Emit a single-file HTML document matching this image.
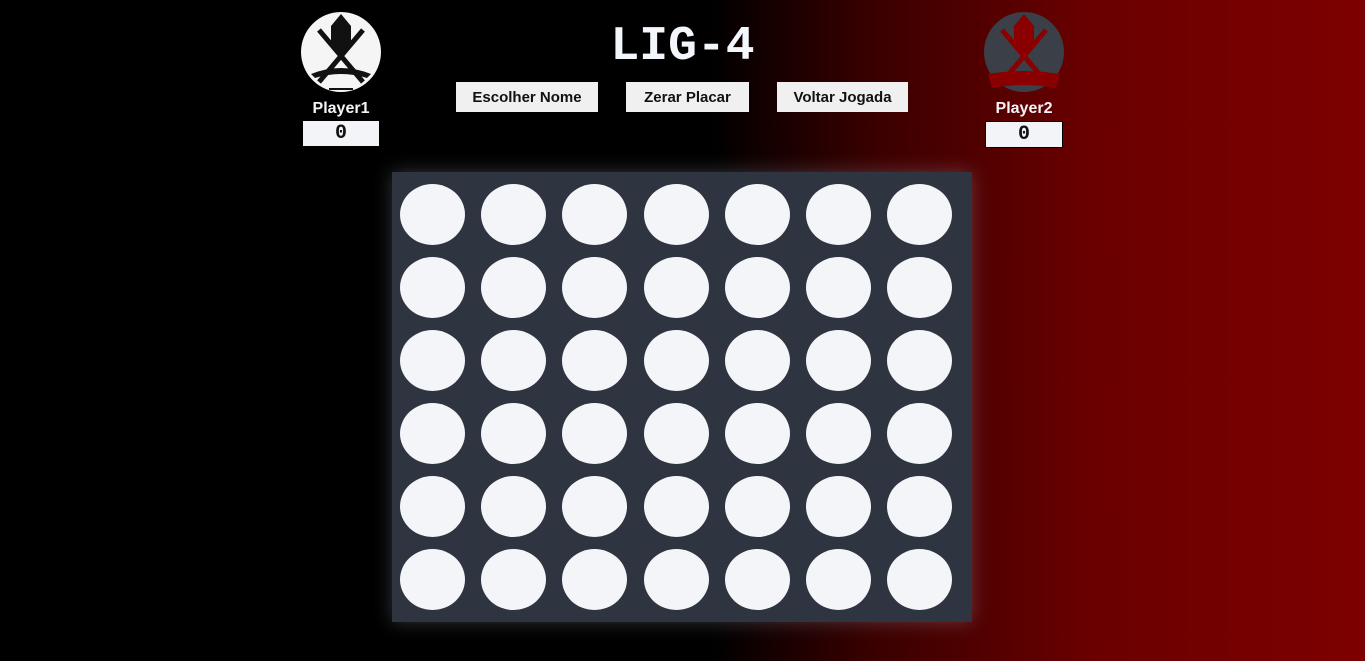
<!DOCTYPE html>
<html><head><style>
body{margin:0;width:1365px;height:661px;overflow:hidden;background:linear-gradient(90deg,#000 0%,#000 52%,#3a0000 64%,#6a0000 80%,#7d0000 100%);font-family:"Liberation Sans",sans-serif;position:relative}
.t{position:absolute;color:#f3f4f8;font-weight:bold}
.btn{position:absolute;top:82px;height:30px;background:#f0f0f0;font:bold 15px "Liberation Sans",sans-serif;color:#111;display:flex;align-items:center;justify-content:center;white-space:nowrap}
.score{position:absolute;top:121px;width:76px;height:25px;background:#f3f4f8;font:bold 20px "Liberation Mono",monospace;text-align:center;line-height:25px;color:#111}
.board{position:absolute;left:392px;top:172px;width:580px;height:450px;background:#2e3440;box-shadow:0 0 18px rgba(200,210,230,.25)}
.c{position:absolute;width:65px;height:61px;border-radius:50%;background:#f4f5f8}
</style></head><body>
<svg style="position:absolute;left:301px;top:12px" width="80" height="80"><circle cx="40" cy="40" r="40" fill="#f5f5f5"/><path d="M40 2 L50 14 L50 30 L44 40 L36 40 L30 30 L30 14 Z" fill="#111"/><path d="M18 18 L62 70 M62 18 L18 70" stroke="#111" stroke-width="5"/><path d="M10 62 Q40 50 70 62 L66 66 Q40 58 14 66Z" fill="#111"/><rect x="28" y="76" width="24" height="2" fill="#111"/></svg>
<svg style="position:absolute;left:984px;top:12px" width="80" height="80"><circle cx="40" cy="40" r="40" fill="#3b4048"/><path d="M40 2 L50 14 L50 30 L44 40 L36 40 L30 30 L30 14 Z" fill="#8a0000"/><path d="M18 18 L62 70 M62 18 L18 70" stroke="#8a0000" stroke-width="5"/><path d="M4 62 Q40 56 76 62 L72 76 Q40 70 8 76Z" fill="#8a0000"/></svg>
<div class="t" style="left:0;width:1365px;top:20px;text-align:center;font:bold 48px 'Liberation Mono',monospace;color:#f3f6fb">LIG-4</div>
<div class="t" style="left:296px;width:90px;top:100px;text-align:center;font-size:16px">Player1</div>
<div class="t" style="left:979px;width:90px;top:100px;text-align:center;font-size:16px">Player2</div>
<div class="score" style="left:303px">0</div>
<div class="score" style="left:985px;border:1px solid #000;width:76px;height:25px">0</div>
<div class="btn" style="left:456px;width:142px">Escolher Nome</div>
<div class="btn" style="left:626px;width:123px">Zerar Placar</div>
<div class="btn" style="left:777px;width:131px">Voltar Jogada</div>
<div class="board">
<script>
for(let r=0;r<6;r++)for(let c=0;c<7;c++)document.write('<div class="c" style="left:'+(8+c*81.2)+'px;top:'+(12+r*73)+'px"></div>');
</script>
</div>
</body></html>
